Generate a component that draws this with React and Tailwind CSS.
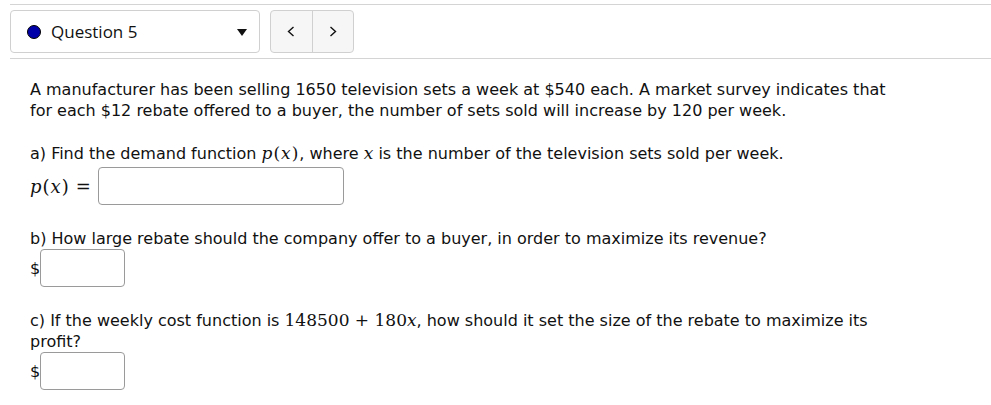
import React from 'react';

const body = { fontFamily: '"DejaVu Sans", "Open Sans", sans-serif' };
const head = { fontFamily: '"Open Sans", "DejaVu Sans", sans-serif' };

function M({ children, className = '' }) {
    return (
        <span className={`text-[17px] leading-[21px] ${className}`} style={{ fontFamily: '"DejaVu Serif", "Liberation Serif", serif' }}>
            {children}
        </span>
    );
}

function I({ children }) {
    return <span className="italic">{children}</span>;
}

function AnswerBox({ className }) {
    return <div className={`h-[38px] rounded-[4px] border border-[#9a9a9a] bg-white ${className}`}></div>;
}

function Chevron({ dir }) {
    return (
        <svg width="8" height="11" viewBox="0 0 8 11" fill="none" stroke="#111" strokeWidth="1.4">
            {dir === 'left' ? <polyline points="6.5,1 1.5,5.5 6.5,10" /> : <polyline points="1.5,1 6.5,5.5 1.5,10" />}
        </svg>
    );
}

export default function App() {
    return (
        <div className="w-full h-[405px] bg-white text-[#111] overflow-hidden" style={body}>
            {/* Question nav */}
            <div className="pt-1 pl-[10px]" style={head}>
                <div className="border-t border-b border-[#d4d4d4] pt-[5px] pb-[5px] flex gap-[10px]">
                    <div className="w-[250px] h-[43px] rounded-[4px] border border-[#d0d0d0] flex items-center pl-[16px] pr-[12px]">
                        <span className="w-[14px] h-[14px] rounded-full bg-[#0000a8] border border-black"></span>
                        <span className="ml-[10px] text-[17px]">Question 5</span>
                        <svg className="ml-auto mt-[2px]" width="10" height="7" viewBox="0 0 10 7">
                            <polygon points="0,0 10,0 5,7" fill="#111" />
                        </svg>
                    </div>
                    <div className="w-[84px] h-[43px] rounded-[4px] border border-[#d0d0d0] bg-[#f6f6f6] flex">
                        <div className="flex-1 flex items-center justify-center border-r border-[#d0d0d0]">
                            <Chevron dir="left" />
                        </div>
                        <div className="flex-1 flex items-center justify-center">
                            <Chevron dir="right" />
                        </div>
                    </div>
                </div>
            </div>

            {/* Question body */}
            <div className="pl-[30px] pr-4 text-[16px] leading-[21px]">
                <p className="mt-[20px] w-[870px]">
                    A manufacturer has been selling 1650 television sets a week at $540 each. A market survey indicates that
                    for each $12 rebate offered to a buyer, the number of sets sold will increase by 120 per week.
                </p>

                <p className="mt-[22px]">
                    a) Find the demand function <M className="tracking-[1px]"><I>p</I>(<I>x</I>)</M>, where <M><I>x</I></M> is the number of the television sets sold per week.
                </p>
                <div className="mt-[3px] flex items-center">
                    <span className="w-[68px] flex items-center">
                        <M className="text-[18px] tracking-[1px]"><I>p</I>(<I>x</I>)</M>
                        <M className="text-[18px] ml-[6px]">=</M>
                    </span>
                    <AnswerBox className="w-[246px]" />
                </div>

                <p className="mt-[23px]">
                    b) How large rebate should the company offer to a buyer, in order to maximize its revenue?
                </p>
                <div className="flex items-center">
                    <span className="w-[10px]">$</span>
                    <AnswerBox className="w-[85px]" />
                </div>

                <p className="mt-[23px] w-[870px]">
                    c) If the weekly cost function is <M>148500 + 180<I>x</I></M>, how should it set the size of the rebate to maximize its
                    profit?
                </p>
                <div className="flex items-center">
                    <span className="w-[10px]">$</span>
                    <AnswerBox className="w-[85px]" />
                </div>
            </div>
        </div>
    );
}
